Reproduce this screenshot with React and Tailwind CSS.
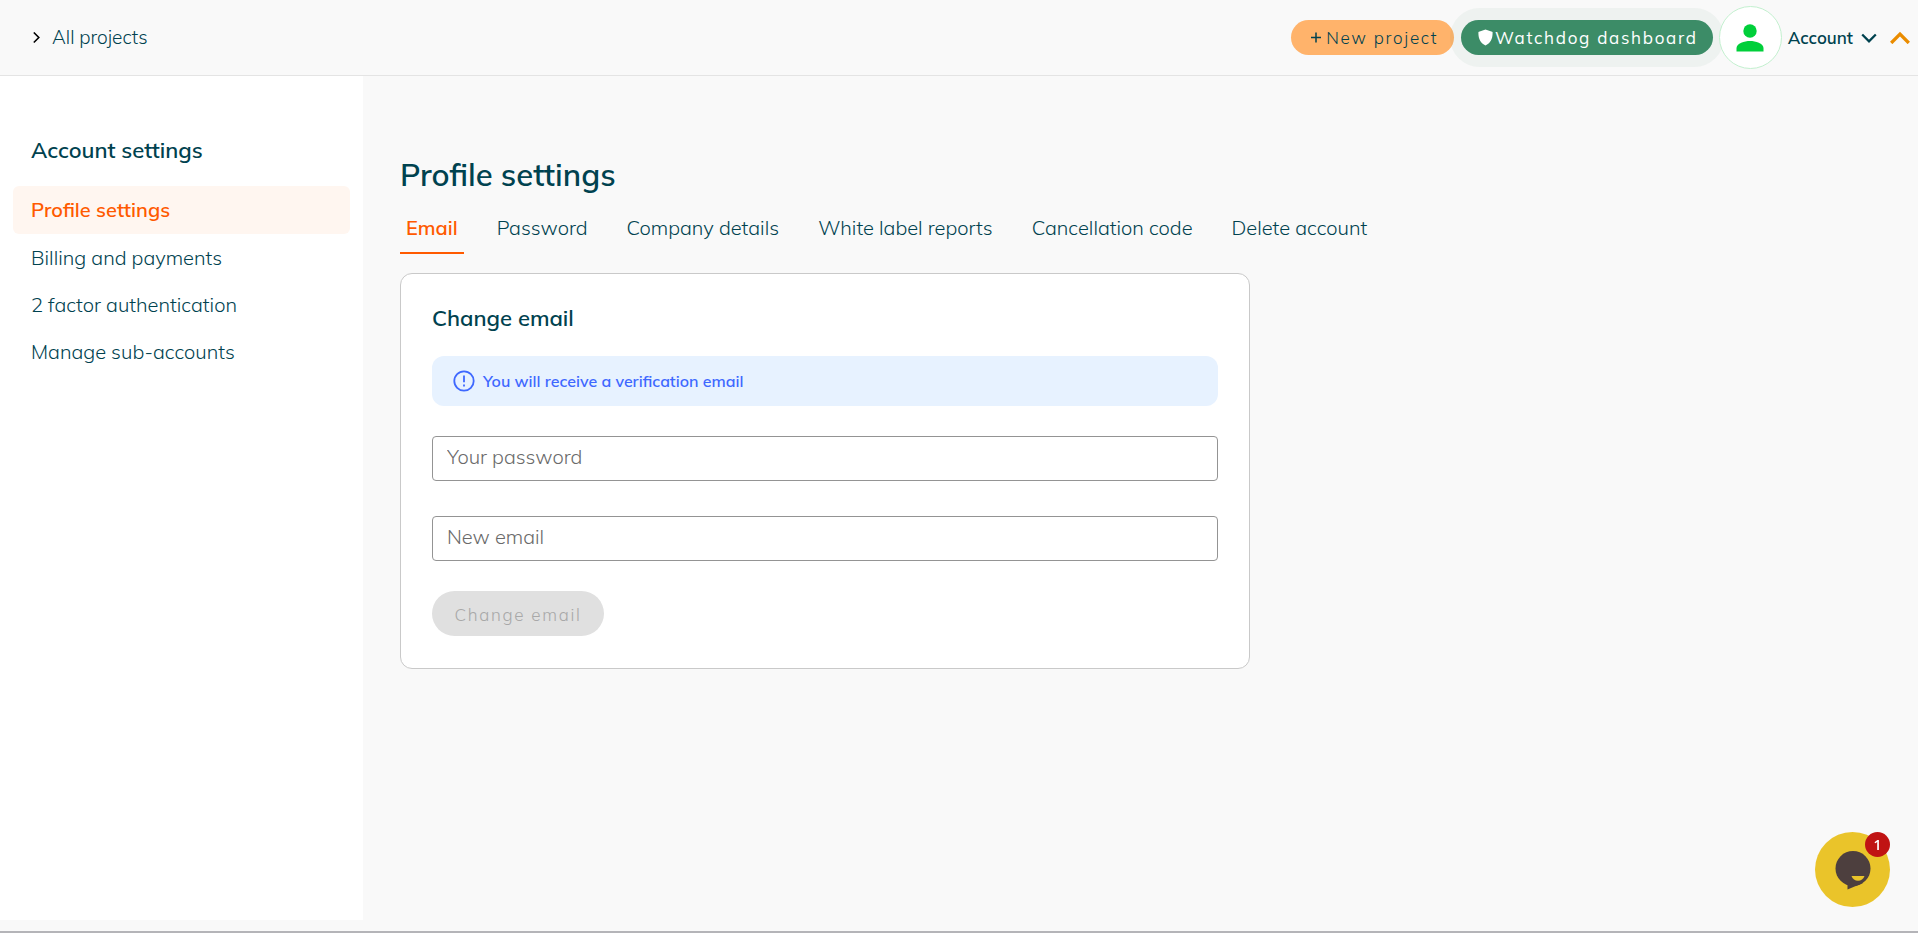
import React, { useState } from 'react';

const menuItems = ['Profile settings', 'Billing and payments', '2 factor authentication', 'Manage sub-accounts'];

const tabs = ['Email', 'Password', 'Company details', 'White label reports', 'Cancellation code', 'Delete account'];

function Header() {
  return (
    <header className="flex h-[76px] items-center justify-between border-b border-[#e4e4e4] pl-8 pr-2">
      <a href="#projects" className="flex items-center gap-3 text-[19px]">
        <svg viewBox="0 0 8 12" className="h-3 w-2 text-black" fill="none" stroke="currentColor" strokeWidth="1.600" aria-hidden="true">
          <path d="m1.800.5 5 5-5 5" />
        </svg>
        All projects
      </a>

      <div className="flex items-center">
        <button type="button" className="flex h-[35px] w-[163px] items-center justify-center rounded-full bg-[#ffb36b] pl-1 text-[17px] tracking-widest">
          <svg viewBox="0 0 12 12" className="mr-1 h-3 w-3" aria-hidden="true">
            <path d="M6 .5v10M1 5.500h10" stroke="currentColor" strokeWidth="1.500" fill="none" />
          </svg>
          New project
        </button>
        <div className="relative ml-[7px]">
          <span className="absolute -inset-x-[11px] -inset-y-3 rounded-full bg-[#3c8c67]/6" />
          <button type="button" className="relative flex h-[35px] w-[252px] items-center justify-center rounded-full bg-[#3c8c67] pl-[2px] text-[17px] font-normal text-white tracking-widest">
            <svg viewBox="0 0 16 18" className="mr-[2px] h-[17px] w-[15px]" fill="currentColor" aria-hidden="true">
              <path d="M8 .5 15 2.800c.4.100.6.500.6.900C15.600 11 13 15.500 8 17.500 3 15.500.4 11 .4 3.700c0-.4.2-.8.6-.9z" />
            </svg>
            Watchdog dashboard
          </button>
        </div>
        <div className="relative ml-[6px] flex h-[63px] w-[63px] items-center justify-center rounded-full border border-[#c3f0cf] bg-white">
          <svg viewBox="0 0 28 28" className="h-7 w-7 text-[#00cf3a]" fill="currentColor" aria-hidden="true">
            <circle cx="14" cy="7" r="6.700" />
            <path d="M.5 27.500v-3.500c0-4.500 8-7 13.500-7s13.500 2.500 13.500 7v3.500z" />
          </svg>
        </div>
        <button type="button" className="ml-[6px] flex items-center gap-2 text-[17px] font-semibold">
          Account
          <svg viewBox="0 0 16 10" className="h-[10px] w-4" fill="none" stroke="currentColor" strokeWidth="2.300" aria-hidden="true">
            <path d="m1.200 1.500 6.800 6.800 6.800-6.800" />
          </svg>
        </button>
        <button type="button" aria-label="Collapse" className="ml-[13px] text-[#ea8c00]">
          <svg viewBox="0 0 20 13" className="h-[13px] w-5" fill="none" stroke="currentColor" strokeWidth="3.300" aria-hidden="true">
            <path d="m1.200 12 8.800-8.800 8.800 8.800" />
          </svg>
        </button>
      </div>
    </header>
  );
}

function Sidebar({ active, onSelect }) {
  return (
    <aside className="w-[363px] shrink-0 bg-white px-[13px] pt-[58px]">
      <h2 className="px-[18px] text-[22px] font-semibold leading-8">Account settings</h2>
      <nav className="mt-5 flex flex-col">
        {menuItems.map((item) => (
          <a
            key={item}
            href="#settings"
            onClick={() => onSelect(item)}
            className={
              item === active
                ? 'flex h-12 items-center rounded-md bg-[#fff6f0] px-[18px] text-xl font-semibold text-[#ff5a00]'
                : 'flex h-[47px] items-center px-[18px] text-xl'
            }
          >
            {item}
          </a>
        ))}
      </nav>
    </aside>
  );
}

function EmailForm() {
  return (
    <form className="mt-[19px] max-w-[850px] rounded-xl border border-[#c9c9c9] bg-white px-[31px] pb-8 pt-7">
      <h2 className="text-[22px] font-semibold leading-8">Change email</h2>
      <div className="mt-[22px] flex h-[50px] items-center gap-2 rounded-xl bg-[#e7f2ff] px-[21px] text-base font-semibold text-[#3e68ff]">
        <svg viewBox="0 0 22 22" className="h-[22px] w-[22px]" fill="none" stroke="currentColor" aria-hidden="true">
          <circle cx="11" cy="11" r="9.700" strokeWidth="1.800" />
          <path d="M11 5.500v6.700M11 14.500v2" strokeWidth="1.800" />
        </svg>
        You will receive a verification email
      </div>
      <input
        type="password"
        aria-label="Your password"
        placeholder="Your password"
        className="mt-[30px] block h-[45px] w-full rounded border border-[#949494] px-[14px] pb-1 text-xl placeholder:text-[#6a6a6a]"
      />
      <input
        type="email"
        aria-label="New email"
        placeholder="New email"
        className="mt-[35px] block h-[45px] w-full rounded border border-[#949494] px-[14px] pb-1 text-xl placeholder:text-[#6a6a6a]"
      />
      <button type="button" disabled className="mt-[30px] h-[45px] w-[172px] rounded-full bg-[#e0e0e0] pt-[2px] text-[17px] text-[#a8a8a8] tracking-widest">
        Change email
      </button>
    </form>
  );
}

function ChatWidget() {
  return (
    <button type="button" aria-label="Open chat" className="fixed bottom-[26px] right-7 flex h-[75px] w-[75px] items-center justify-center rounded-full bg-[#eac42a]">
      <svg viewBox="0 0 36 40" className="h-10 w-9" aria-hidden="true">
        <circle cx="18" cy="18.500" r="17.500" fill="#4d3f3e" />
        <path d="M12.500 33v6.500L28 33z" fill="#4d3f3e" />
        <path d="M16.500 26h13c-1 3-3.500 4.700-6.500 4.700s-5.500-1.700-6.500-4.700z" fill="#eac42a" />
      </svg>
      <span className="absolute right-0 top-0 flex h-[25px] w-[25px] items-center justify-center rounded-full bg-[#c01313] font-['Open_Sans',sans-serif] text-sm font-semibold text-white">1</span>
    </button>
  );
}

export default function App() {
  const [page, setPage] = useState('Profile settings');
  const [tab, setTab] = useState('Email');

  return (
    <div className="flex min-h-screen flex-col bg-[#f9f9f9] font-['Mulish','Muli','Lato',sans-serif] font-light text-[#00424f]">
      <Header />
      <div className="flex grow">
        <Sidebar active={page} onSelect={setPage} />
        <main className="grow pl-[37px] pr-8 pt-[79px]">
          <h1 className="text-[31px] font-semibold leading-10">Profile settings</h1>
          <div role="tablist" className="mt-[15px] flex gap-[27px]">
            {tabs.map((name) => (
              <button
                key={name}
                type="button"
                role="tab"
                aria-selected={name === tab}
                onClick={() => setTab(name)}
                className={
                  name === tab
                    ? 'h-11 border-b-2 border-[#ff5a00] px-[6px] pb-[6px] text-xl font-semibold text-[#ff5a00]'
                    : 'h-11 border-b-2 border-transparent px-[6px] pb-[6px] text-xl'
                }
              >
                {name}
              </button>
            ))}
          </div>
          <EmailForm />
        </main>
      </div>
      <footer className="h-[13px] border-b-2 border-[#b4b4b8]" />
      <ChatWidget />
    </div>
  );
}
